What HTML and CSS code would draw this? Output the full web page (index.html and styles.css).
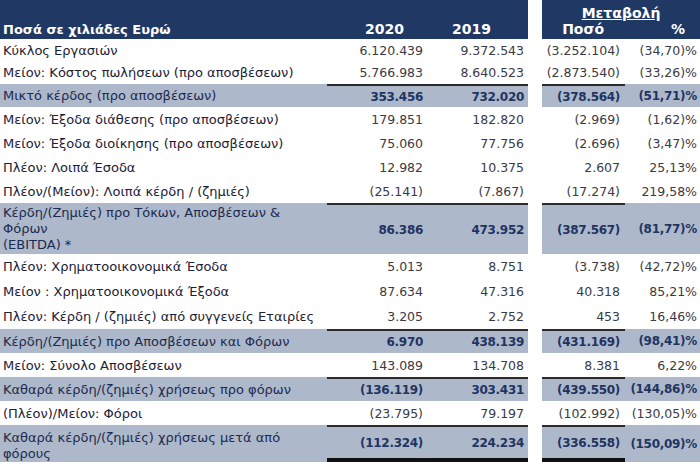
FILE: index.html
```html
<!DOCTYPE html>
<html lang="el">
<head>
<meta charset="utf-8">
<title>Αποτελέσματα</title>
<link rel="stylesheet" href="styles.css">
</head>
<body>
<div class="table">
  <div class="row head">
    <div class="c lbl"><span>Ποσά σε χιλιάδες Ευρώ</span></div>
    <div class="c n1">2020</div>
    <div class="c n2">2019</div>
    <div class="c gap"></div>
    <div class="c chg">
      <div class="chg-title">Μεταβολή</div>
      <div class="chg-cols"><span class="h-amt">Ποσό</span><span class="h-pct">%</span></div>
    </div>
  </div>

  <div class="row r-a">
    <div class="c lbl">Κύκλος Εργασιών</div>
    <div class="c n1">6.120.439</div><div class="c n2">9.372.543</div><div class="c gap"></div>
    <div class="c n3">(3.252.104)</div><div class="c n4">(34,70)%</div>
  </div>
  <div class="row r-a">
    <div class="c lbl">Μείον: Κόστος πωλήσεων (προ αποσβέσεων)</div>
    <div class="c n1">5.766.983</div><div class="c n2">8.640.523</div><div class="c gap"></div>
    <div class="c n3">(2.873.540)</div><div class="c n4">(33,26)%</div>
  </div>
  <div class="row sub r-m">
    <div class="c lbl">Μικτό κέρδος (προ αποσβέσεων)</div>
    <div class="c n1">353.456</div><div class="c n2">732.020</div><div class="c gap"></div>
    <div class="c n3">(378.564)</div><div class="c n4">(51,71)%</div>
  </div>
  <div class="row r-b">
    <div class="c lbl">Μείον: Έξοδα διάθεσης (προ αποσβέσεων)</div>
    <div class="c n1">179.851</div><div class="c n2">182.820</div><div class="c gap"></div>
    <div class="c n3">(2.969)</div><div class="c n4">(1,62)%</div>
  </div>
  <div class="row r-b">
    <div class="c lbl">Μείον: Έξοδα διοίκησης (προ αποσβέσεων)</div>
    <div class="c n1">75.060</div><div class="c n2">77.756</div><div class="c gap"></div>
    <div class="c n3">(2.696)</div><div class="c n4">(3,47)%</div>
  </div>
  <div class="row r-b">
    <div class="c lbl">Πλέον: Λοιπά Έσοδα</div>
    <div class="c n1">12.982</div><div class="c n2">10.375</div><div class="c gap"></div>
    <div class="c n3">2.607</div><div class="c n4">25,13%</div>
  </div>
  <div class="row r-b">
    <div class="c lbl">Πλέον/(Μείον): Λοιπά κέρδη / (ζημιές)</div>
    <div class="c n1">(25.141)</div><div class="c n2">(7.867)</div><div class="c gap"></div>
    <div class="c n3">(17.274)</div><div class="c n4">219,58%</div>
  </div>
  <div class="row sub r-e">
    <div class="c lbl multi">Κέρδη/(Ζημιές) προ Τόκων, Αποσβέσεων &amp;<br>Φόρων<br>(EBITDA) *</div>
    <div class="c n1">86.386</div><div class="c n2">473.952</div><div class="c gap"></div>
    <div class="c n3">(387.567)</div><div class="c n4">(81,77)%</div>
  </div>
  <div class="row r-c">
    <div class="c lbl">Πλέον: Χρηματοοικονομικά Έσοδα</div>
    <div class="c n1">5.013</div><div class="c n2">8.751</div><div class="c gap"></div>
    <div class="c n3">(3.738)</div><div class="c n4">(42,72)%</div>
  </div>
  <div class="row r-c">
    <div class="c lbl">Μείον : Χρηματοοικονομικά Έξοδα</div>
    <div class="c n1">87.634</div><div class="c n2">47.316</div><div class="c gap"></div>
    <div class="c n3">40.318</div><div class="c n4">85,21%</div>
  </div>
  <div class="row r-c">
    <div class="c lbl">Πλέον: Κέρδη / (ζημιές) από συγγενείς Εταιρίες</div>
    <div class="c n1">3.205</div><div class="c n2">2.752</div><div class="c gap"></div>
    <div class="c n3">453</div><div class="c n4">16,46%</div>
  </div>
  <div class="row sub r-b">
    <div class="c lbl">Κέρδη/(Ζημιές) προ Αποσβέσεων και Φόρων</div>
    <div class="c n1">6.970</div><div class="c n2">438.139</div><div class="c gap"></div>
    <div class="c n3">(431.169)</div><div class="c n4">(98,41)%</div>
  </div>
  <div class="row r-b">
    <div class="c lbl">Μείον: Σύνολο Αποσβέσεων</div>
    <div class="c n1">143.089</div><div class="c n2">134.708</div><div class="c gap"></div>
    <div class="c n3">8.381</div><div class="c n4">6,22%</div>
  </div>
  <div class="row sub r-b">
    <div class="c lbl">Καθαρά κέρδη/(ζημιές) χρήσεως προ φόρων</div>
    <div class="c n1">(136.119)</div><div class="c n2">303.431</div><div class="c gap"></div>
    <div class="c n3">(439.550)</div><div class="c n4">(144,86)%</div>
  </div>
  <div class="row r-b">
    <div class="c lbl">(Πλέον)/Μείον: Φόροι</div>
    <div class="c n1">(23.795)</div><div class="c n2">79.197</div><div class="c gap"></div>
    <div class="c n3">(102.992)</div><div class="c n4">(130,05)%</div>
  </div>
  <div class="row sub last r-l">
    <div class="c lbl multi">Καθαρά κέρδη/(ζημιές) χρήσεως μετά από<br>φόρους</div>
    <div class="c n1">(112.324)</div><div class="c n2">224.234</div><div class="c gap"></div>
    <div class="c n3">(336.558)</div><div class="c n4">(150,09)%</div>
  </div>
</div>
</body>
</html>
```

FILE: styles.css
```css
html, body {
  margin: 0;
  padding: 0;
  background: #ffffff;
}
body {
  font-family: "DejaVu Sans", "Noto Sans", sans-serif;
  font-size: 12.5px;
  color: #2a2f45;
}
.table {
  width: 700px;
}
.row {
  display: grid;
  grid-template-columns: 327px 101px 100px 14px 83px 75px;
}
.c {
  display: flex;
  align-items: center;
  white-space: nowrap;
}
.lbl {
  padding-left: 3px;
  color: #1c2135;
  font-size: 13px;
}
.n1, .n2, .n3, .n4 {
  justify-content: flex-end;
  color: #3a3a44;
}
.n1 { padding-right: 5px; }
.n2 { padding-right: 4px; }
.n3 { padding-right: 5px; }
.n4 { padding-right: 3px; }

/* header */
.head {
  height: 39px;
}
.head .c {
  background: #1f3864;
  color: #ffffff;
  font-weight: bold;
  font-size: 14px;
  align-items: flex-end;
  padding-bottom: 2px;
}
.head .lbl { padding-left: 3px; font-size: 13px; }
.head .n1 { padding-right: 24px; }
.head .n2 { padding-right: 37px; }
.head .gap { background: #ffffff; }
.head .chg {
  grid-column: 5 / 7;
  flex-direction: column;
  align-items: stretch;
  justify-content: space-between;
  padding: 5px 0 2px 0;
}
.chg-title {
  text-align: center;
  text-decoration: underline;
  font-size: 14px;
}
.chg-cols {
  display: grid;
  grid-template-columns: 83px 75px;
}
.h-amt { text-align: right; padding-right: 21px; }
.h-pct { text-align: right; padding-right: 15px; }

/* row heights */
.r-a { height: 22.5px; }
.r-m { height: 23px; }
.r-b { height: 24px; }
.r-c { height: 25px; }
.r-e { height: 51px; }
.r-l { height: 37px; }

/* subtotal rows */
.sub .lbl,
.sub .n1, .sub .n2, .sub .n3, .sub .n4 {
  background: #adb9ca;
}
.sub .lbl { color: #1c2a50; }
.sub .n1, .sub .n2, .sub .n3, .sub .n4 {
  color: #1f3463;
  font-weight: bold;
  font-size: 12px;
  letter-spacing: -0.3px;
}
.sub .n1, .sub .n2, .sub .n3 {
  border-top: 2px solid #2b2b2b;
}
.last .n1, .last .n2, .last .n3 {
  border-bottom: 4px solid #111111;
}
.multi {
  white-space: normal;
  line-height: 16px;
}
.last .multi {
  padding-top: 4px;
}
```
